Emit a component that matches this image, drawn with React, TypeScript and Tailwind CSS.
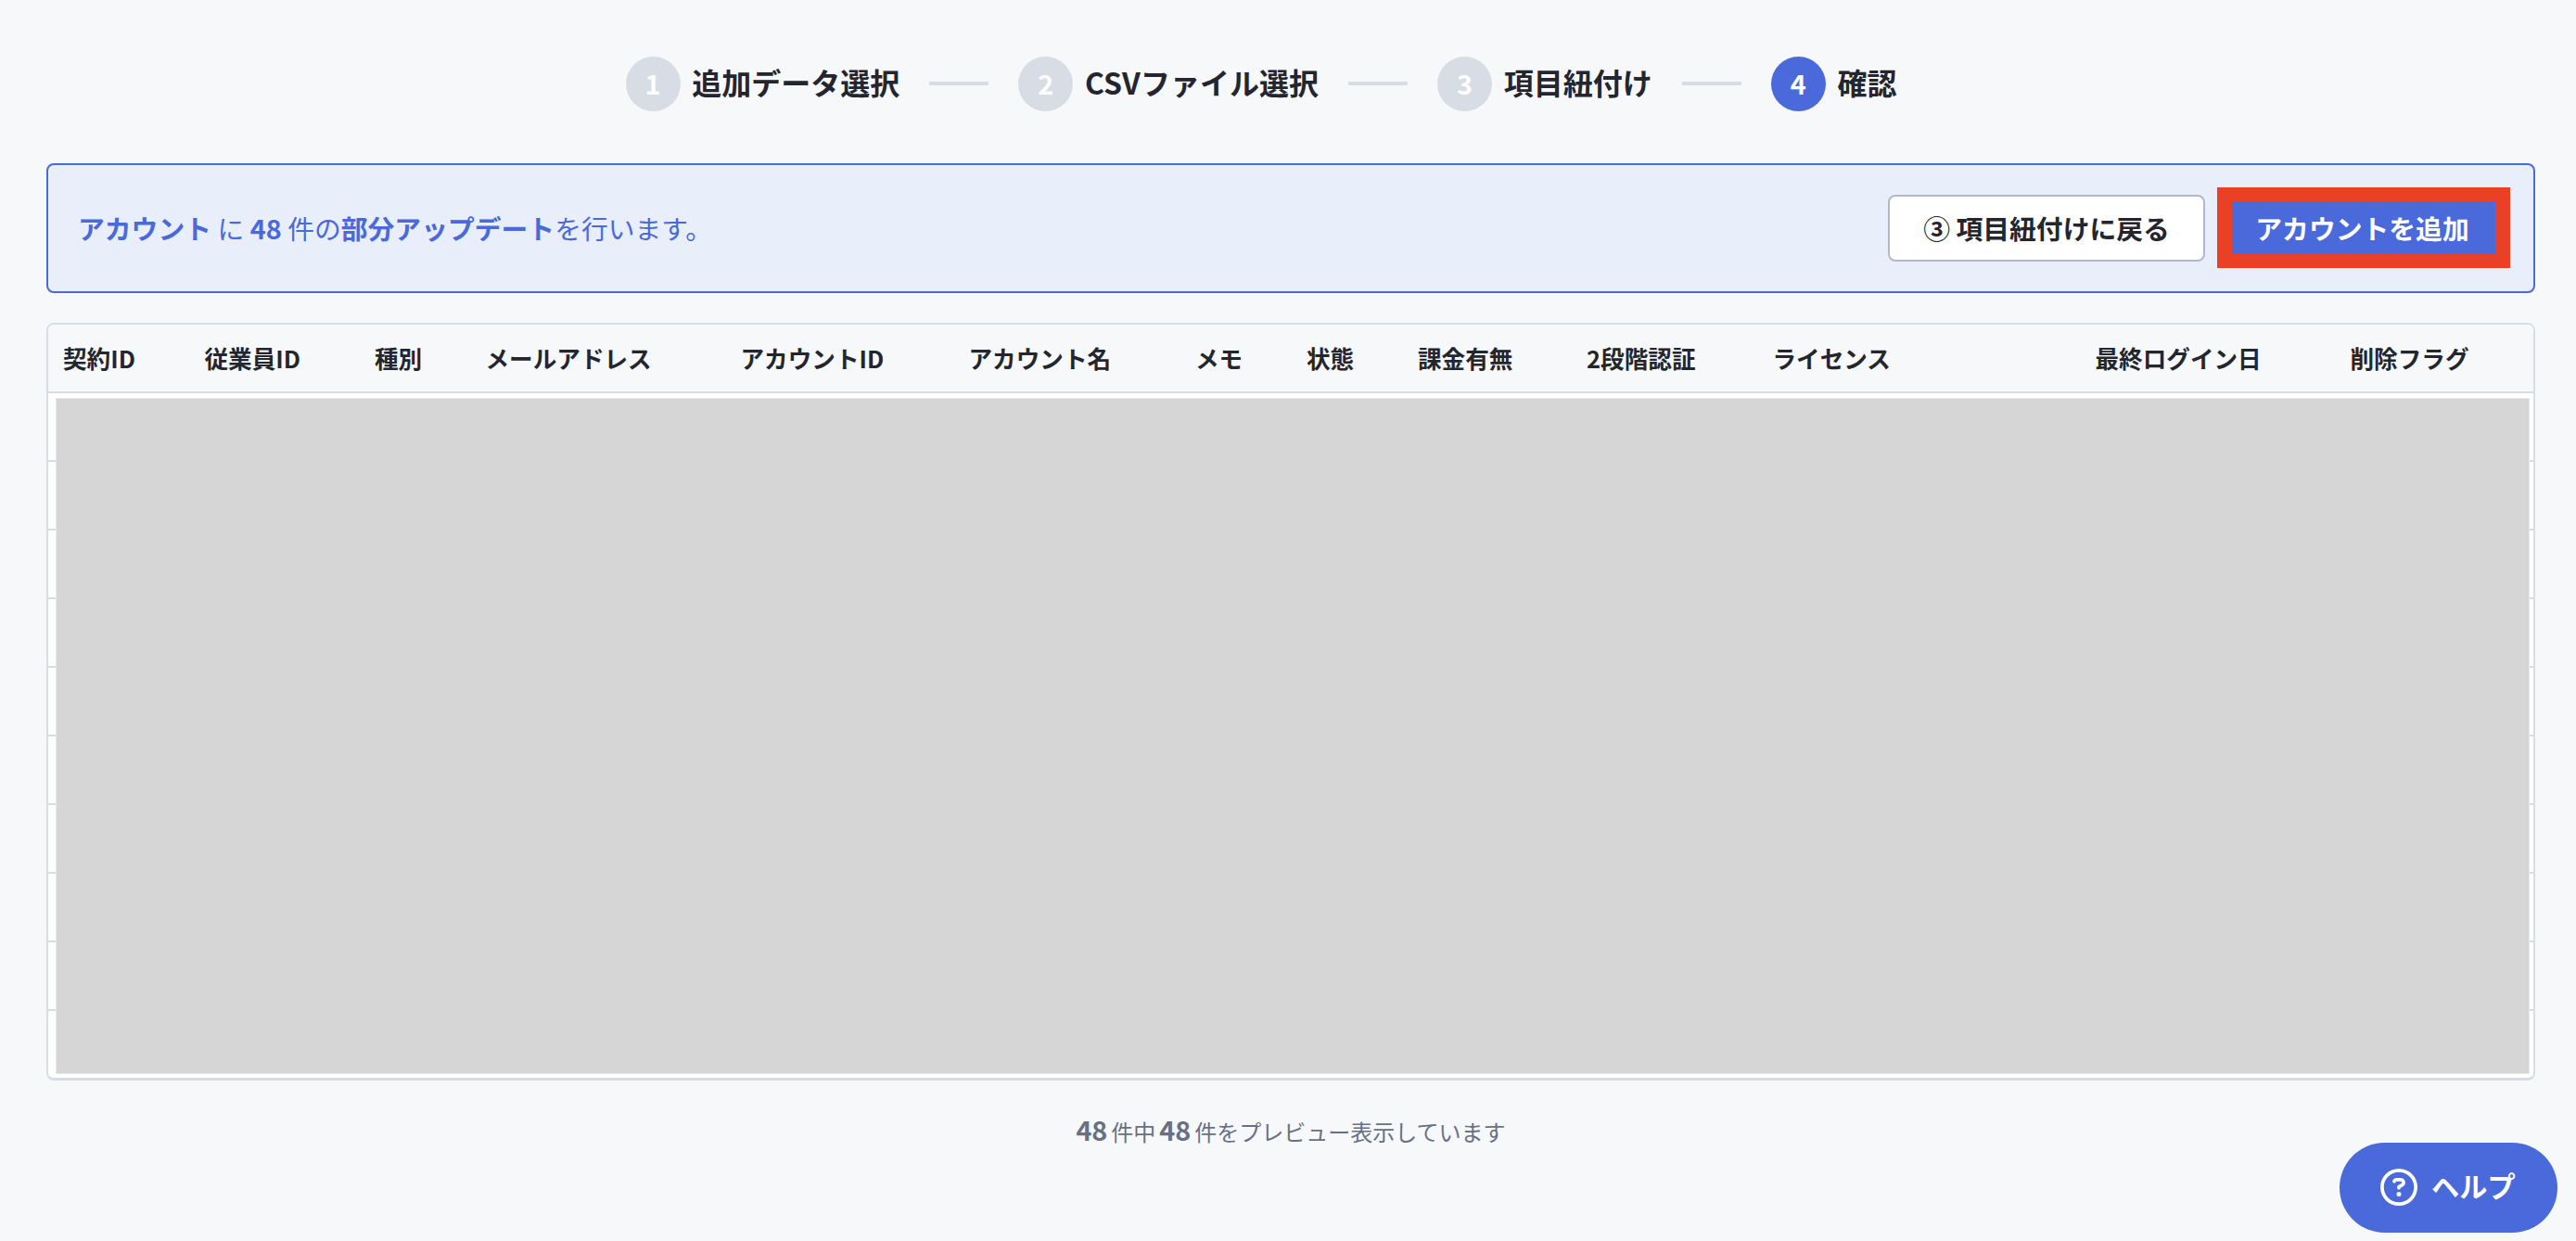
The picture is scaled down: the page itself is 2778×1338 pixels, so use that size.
import { Fragment } from "react";
import { FaRegCircleQuestion } from "react-icons/fa6";
import clsx from "clsx";

const steps = ["追加データ選択", "CSVファイル選択", "項目紐付け", "確認"];
const currentStep = 4;

const columns = [
  { label: "契約ID", width: 152.5 },
  { label: "従業員ID", width: 183.5 },
  { label: "種別", width: 119.5 },
  { label: "メールアドレス", width: 275 },
  { label: "アカウントID", width: 246 },
  { label: "アカウント名", width: 244.5 },
  { label: "メモ", width: 120 },
  { label: "状態", width: 120 },
  { label: "課金有無", width: 182 },
  { label: "2段階認証", width: 200.5 },
  { label: "ライセンス", width: 348 },
  { label: "最終ログイン日", width: 275 },
  { label: "削除フラグ", width: 198 },
];

const rows = Array.from({ length: 10 }, (_, i) => i);

function Stepper() {
  return (
    <ol className="flex h-[59px] items-center pl-[624.5px]">
      {steps.map((label, i) => (
        <Fragment key={label}>
          {i > 0 && <li aria-hidden className="mx-8 mb-px h-1 w-16 bg-[#d8dce5]" />}
          <li className="flex items-center gap-[12.8px]">
            <span
              className={clsx(
                "flex size-[59px] items-center justify-center rounded-full pb-0.5 text-[28.8px] font-bold text-white",
                i + 1 === currentStep ? "bg-[#4a69db]" : "bg-[#d8dce5]",
              )}
            >
              {i + 1}
            </span>
            <span className="pb-1.5 text-[32px] leading-none font-bold whitespace-nowrap">{label}</span>
          </li>
        </Fragment>
      ))}
    </ol>
  );
}

function ConfirmBar() {
  return (
    <div className="mt-14 flex h-[140px] items-center rounded-lg border-2 border-[#4a69db] bg-[#e8eefa] pr-[25px] pl-8 text-[28.8px]">
      <p className="flex-1 text-[#4a69db]">
        <b>アカウント</b> に <b>48</b> 件の<b>部分アップデート</b>を行います。
      </p>
      <button className="h-[72px] w-[342px] rounded-lg border-2 border-[#b1b9c8] bg-white font-bold whitespace-nowrap">
        ③ 項目紐付けに戻る
      </button>
      <button className="mb-px ml-[13px] h-[87px] w-[316px] border-x-16 border-y-15 border-[#ea4026] bg-[#4a69db] pr-[3px] font-bold whitespace-nowrap text-white">
        アカウントを追加
      </button>
    </div>
  );
}

function PreviewTable() {
  return (
    <div className="relative mt-8 overflow-hidden rounded-lg border-2 border-b-3 border-[#d8dce5] bg-white">
      <div className="flex h-[74px] items-center border-b-2 border-[#d8dce5] bg-[#f7f8fa] pl-4 text-[25.6px] font-bold">
        {columns.map((c) => (
          <div key={c.label} className="shrink-0 whitespace-nowrap" style={{ width: c.width }}>
            {c.label}
          </div>
        ))}
      </div>
      {rows.map((r) => (
        <div key={r} className="h-[74px] border-b-2 border-[#d8dce5] last-of-type:h-[72px] last-of-type:border-b-0" />
      ))}
      {/* mask over the customer data */}
      <span className="absolute top-[79px] right-1 bottom-1 left-2 border border-[#e9e9e9] bg-[#d6d6d6]" />
    </div>
  );
}

export default function App() {
  return (
    <div
      lang="ja"
      className="relative h-[1338px] w-[2778px] overflow-hidden bg-[#f7f8fa] pt-[61px] pr-11 pl-[50px] font-['Noto_Sans_CJK_JP',sans-serif] text-[#23262e]"
    >
      <Stepper />
      <ConfirmBar />
      <PreviewTable />
      <p className="mt-[34px] flex h-10 items-baseline justify-center text-2xl text-[#687085]">
        <b className="mr-1 text-[28.8px]">48</b>件中
        <b className="mx-1 text-[28.8px]">48</b>件をプレビュー表示しています
      </p>
      <button className="absolute top-[1232px] left-[2523px] flex h-[97px] w-[235px] items-center rounded-full bg-[#4a69db] pb-px pl-11 font-bold text-white">
        <FaRegCircleQuestion className="size-10" />
        <span className="ml-[15px] pb-0.5 text-[30.2px] whitespace-nowrap">ヘルプ</span>
      </button>
    </div>
  );
}
